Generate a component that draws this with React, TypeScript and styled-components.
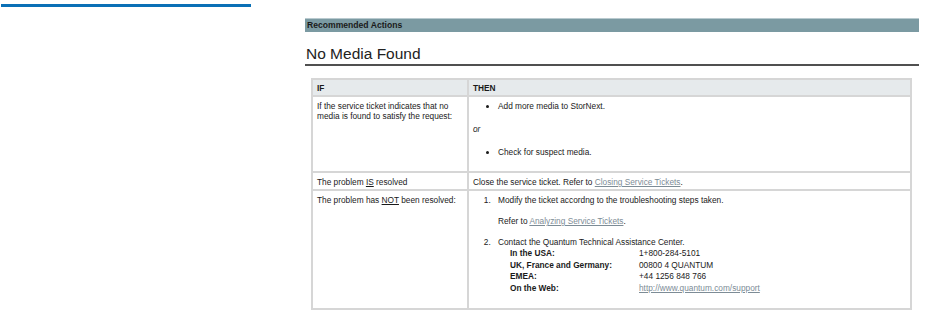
import React from "react";
import styled, { createGlobalStyle } from "styled-components";

const GlobalStyle = createGlobalStyle`
  html, body { margin: 0; padding: 0; background: #fff; }
  body { font-family: "Liberation Sans", Arial, sans-serif; color: #000; }
`;

const Page = styled.div`
  display: flex;
  align-items: flex-start;
  width: 936px;
  height: 311px;
  overflow: hidden;
`;

const Sidebar = styled.div`
  width: 250px;
  margin-left: 1px;
  padding-top: 4px;
`;

const BlueRule = styled.div`
  height: 3px;
  background: #0a70b6;
`;

const Main = styled.div`
  margin-left: 54px;
  width: 614px;
  padding-top: 18px;
`;

const ActionsBar = styled.div`
  height: 13px;
  border-top: 1px solid #b9cacf;
  background: #7b9aa2;
  font-size: 8.6px;
  font-weight: bold;
  line-height: 13px;
  padding-left: 2px;
  color: #1a1a1a;
`;

const Heading = styled.h1`
  margin: 0;
  margin-top: 12px;
  font-size: 15.5px;
  font-weight: normal;
  line-height: 20px;
  color: #222;
  padding-left: 1px;
  border-bottom: 2px solid #505050;
`;

const Table = styled.table`
  margin-top: 12px;
  margin-left: 6px;
  width: 601px;
  border-collapse: collapse;
  font-size: 8.3px;
  line-height: 10px;
  color: #1a1a1a;
`;

const HeadCell = styled.th<{ $w?: number }>`
  width: ${(p) => (p.$w ? `${p.$w}px` : "auto")};
  background: #e6eaec;
  border: 2px solid #d6d6d6;
  text-align: left;
  font-weight: bold;
  height: 14px;
  padding: 1px 4px 0 4px;
  vertical-align: middle;
`;

const Cell = styled.td<{ $h: number }>`
  border: 2px solid #d6d6d6;
  border-top-width: 1px;
  vertical-align: top;
  height: ${(p) => p.$h}px;
  padding: 4px 4px 0 4px;
`;

const Bullets = styled.ul`
  margin: 0;
  padding-left: 25px;
  list-style: disc;
`;

const Or = styled.p`
  margin: 13px 0 13px 0;
  font-style: italic;
`;

const Steps = styled.ol`
  margin: 0;
  padding-left: 20px;
`;

const Step = styled.li<{ $gap?: number }>`
  padding-left: 5px;
  margin-bottom: ${(p) => p.$gap ?? 0}px;
`;

const StepNote = styled.p`
  margin: 11px 0 0 0;
`;

const Link = styled.a`
  color: #7d8c96;
  text-decoration: underline;
`;

const U = styled.span`
  text-decoration: underline;
`;

const Contacts = styled.div`
  display: grid;
  grid-template-columns: 129px auto;
  row-gap: 1px;
  margin-top: 1px;
  margin-left: 12px;
  line-height: 10.5px;
`;

const Label = styled.span`
  font-weight: bold;
`;

export default function App() {
  return (
    <>
      <GlobalStyle />
      <Page>
        <Sidebar>
          <BlueRule />
        </Sidebar>
        <Main>
          <ActionsBar>Recommended Actions</ActionsBar>
          <Heading>No Media Found</Heading>
          <Table>
            <thead>
              <tr>
                <HeadCell $w={146}>IF</HeadCell>
                <HeadCell>THEN</HeadCell>
              </tr>
            </thead>
            <tbody>
              <tr>
                <Cell $h={70}>
                  If the service ticket indicates that no media is found to satisfy the request:
                </Cell>
                <Cell $h={70}>
                  <Bullets>
                    <li>Add more media to StorNext.</li>
                  </Bullets>
                  <Or>or</Or>
                  <Bullets>
                    <li>Check for suspect media.</li>
                  </Bullets>
                </Cell>
              </tr>
              <tr>
                <Cell $h={12}>
                  The problem <U>IS</U> resolved
                </Cell>
                <Cell $h={12}>
                  Close the service ticket. Refer to <Link href="#">Closing Service Tickets</Link>.
                </Cell>
              </tr>
              <tr>
                <Cell $h={113}>
                  The problem has <U>NOT</U> been resolved:
                </Cell>
                <Cell $h={113}>
                  <Steps>
                    <Step $gap={11}>
                      Modify the ticket accordng to the troubleshooting steps taken.
                      <StepNote>
                        Refer to <Link href="#">Analyzing Service Tickets</Link>.
                      </StepNote>
                    </Step>
                    <Step>
                      Contact the Quantum Technical Assistance Center.
                      <Contacts>
                        <Label>In the USA:</Label>
                        <span>1+800-284-5101</span>
                        <Label>UK, France and Germany:</Label>
                        <span>00800 4 QUANTUM</span>
                        <Label>EMEA:</Label>
                        <span>+44 1256 848 766</span>
                        <Label>On the Web:</Label>
                        <Link href="#">http://www.quantum.com/support</Link>
                      </Contacts>
                    </Step>
                  </Steps>
                </Cell>
              </tr>
            </tbody>
          </Table>
        </Main>
      </Page>
    </>
  );
}
